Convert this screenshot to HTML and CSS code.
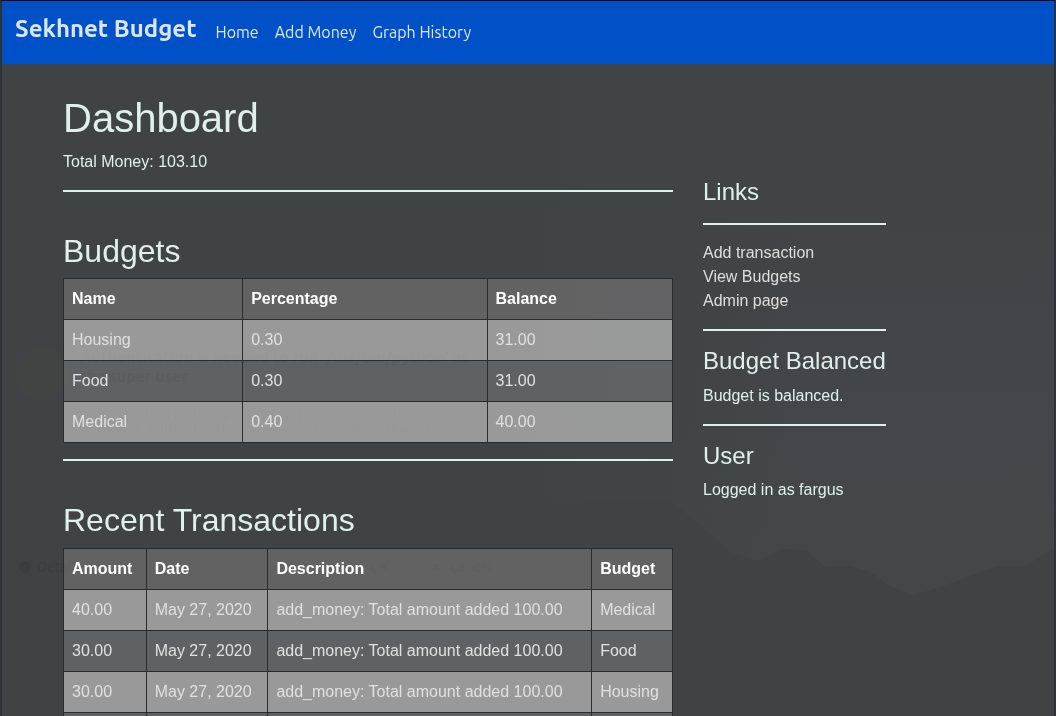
FILE: index.html
```html
<!DOCTYPE html>
<html lang="en">
<head>
<meta charset="utf-8">
<meta name="viewport" content="width=device-width, initial-scale=1">
<title>Sekhnet Budget</title>
<link rel="stylesheet" href="styles.css">
</head>
<body>
<svg class="scenery" viewBox="0 0 1056 716" preserveAspectRatio="xMidYMid slice" aria-hidden="true">
  <defs>
    <linearGradient id="sky" x1="0" y1="0" x2="0" y2="1">
      <stop offset="0" stop-color="#404345"/>
      <stop offset="0.5" stop-color="#424549"/>
      <stop offset="0.85" stop-color="#44474a"/>
    </linearGradient>
    <linearGradient id="haze" x1="0" y1="0" x2="1" y2="0">
      <stop offset="0" stop-color="#404345"/>
      <stop offset="0.5" stop-color="#404345"/>
      <stop offset="0.75" stop-color="#404345" stop-opacity="0"/>
    </linearGradient>
  </defs>
  <path fill="url(#sky)" d="M0 0H1056V716H0Z"/>
  <path fill="url(#haze)" d="M0 0H1056V716H0Z"/>
  <path fill="#404345" d="M0 500H670L700 525L730 552L757 561L785 549L806 550L825 567L850 566L870 572L890 586L913 595L935 589L965 578L998 566H1026L1056 547V716H0Z"/>
  <circle cx="42" cy="374" r="27" fill="#404544"/>
  <g class="ghost">
    <text class="ghost-title" x="80" y="363">Authentication is needed to run '/usr/bin/python' as</text>
    <text class="ghost-title" x="80" y="382">the super user</text>
    <text x="80" y="420">An application is attempting to perform an action that requires</text>
    <text x="80" y="435">privileges. Authentication is required to perform this action.</text>
    <circle cx="25" cy="567" r="6"/>
    <text x="37" y="572">Details</text>
    <text x="370" y="572">OK</text>
    <path d="M434 564l5 6M439 564l-5 6"/>
    <text x="450" y="572">Cancel</text>
  </g>
</svg>
<nav class="navbar">
  <a class="brand" href="#">Sekhnet Budget</a>
  <ul class="nav-links">
    <li><a href="#">Home</a></li>
    <li><a href="#">Add Money</a></li>
    <li><a href="#">Graph History</a></li>
  </ul>
</nav>
<div class="container">
  <main class="content">
    <h1>Dashboard</h1>
    <p>Total Money: 103.10</p>
    <hr>
    <section class="block">
      <h2>Budgets</h2>
      <table>
        <thead><tr><th>Name</th><th>Percentage</th><th>Balance</th></tr></thead>
        <tbody>
          <tr><td>Housing</td><td>0.30</td><td>31.00</td></tr>
          <tr><td>Food</td><td>0.30</td><td>31.00</td></tr>
          <tr><td>Medical</td><td>0.40</td><td>40.00</td></tr>
        </tbody>
      </table>
    </section>
    <hr>
    <section class="block">
      <h2>Recent Transactions</h2>
      <table>
        <thead><tr><th>Amount</th><th>Date</th><th>Description</th><th>Budget</th></tr></thead>
        <tbody>
          <tr><td>40.00</td><td>May 27, 2020</td><td>add_money: Total amount added 100.00</td><td>Medical</td></tr>
          <tr><td>30.00</td><td>May 27, 2020</td><td>add_money: Total amount added 100.00</td><td>Food</td></tr>
          <tr><td>30.00</td><td>May 27, 2020</td><td>add_money: Total amount added 100.00</td><td>Housing</td></tr>
          <tr><td></td><td></td><td></td><td></td></tr>
        </tbody>
      </table>
    </section>
  </main>
  <aside class="sidebar">
    <h4>Links</h4>
    <hr>
    <ul class="side-links">
      <li><a href="#">Add transaction</a></li>
      <li><a href="#">View Budgets</a></li>
      <li><a href="#">Admin page</a></li>
    </ul>
    <hr>
    <h4>Budget Balanced</h4>
    <p>Budget is balanced.</p>
    <hr>
    <h4>User</h4>
    <p>Logged in as fargus</p>
  </aside>
</div>
</body>
</html>
```
FILE: styles.css
```css
* { box-sizing: border-box; }
html { background: #404345; scrollbar-width: none; }
body {
  margin: 0;
  min-height: 100vh;
  border: solid #30323b;
  border-width: 1px 2px 0;
  border-top-color: #08090c;
  color: #e0eeee;
  font: 16px/24px "Liberation Sans", Arial, sans-serif;
}
.scenery { position: fixed; inset: 0; z-index: -1; width: 100%; height: 100%; }
.ghost { fill: #383b3d; stroke: none; opacity: 0.6; font: 14px Ubuntu, "Noto Sans", sans-serif; }
.ghost path { stroke: #383b3d; stroke-width: 2; }
.ghost-title { font-size: 16px; font-weight: 700; }
a { color: inherit; text-decoration: none; }
ul { list-style: none; margin: 0; padding: 0; }

.navbar {
  display: flex;
  align-items: flex-start;
  gap: 11px;
  height: 63px;
  padding: 8px 13px;
  background: #0050c8;
  color: #dce6ee;
  font-family: Ubuntu, "Noto Sans", sans-serif;
}
.brand { font-size: 24px; line-height: 40px; font-weight: 600; }
.nav-links { display: flex; }
.nav-links a { display: block; padding: 11px 8px; }

.container {
  display: flex;
  max-width: 960px;
  margin: 0 auto;
  padding-top: 30px;
}
.content { flex: 0 0 66.6667%; padding: 0 15px; }
.sidebar { padding: 84px 15px 0; }

h1, h2, h4 { margin: 0 0 8px; font-weight: 400; line-height: 1.2; }
h1 { font-size: 40px; }
h2 { font-size: 32px; }
h4 { font-size: 24px; }
p { margin: 0 0 16px; }
hr { margin: 16px 0; border: 0; border-top: 2px solid #e0eeee; }
.block { padding-top: 24px; }
.side-links { color: #dedede; }

table { width: 100%; border-collapse: collapse; color: #e0e0e0; }
th, td { height: 41px; padding: 8px; border: 1px solid #292b2d; text-align: left; }
th { background: rgba(255, 246, 236, 0.18); color: #fff; }
tbody tr:nth-child(odd) { background: rgba(255, 252, 250, 0.466); }
tbody tr:nth-child(even) { background: rgba(252, 255, 255, 0.17); }
```
